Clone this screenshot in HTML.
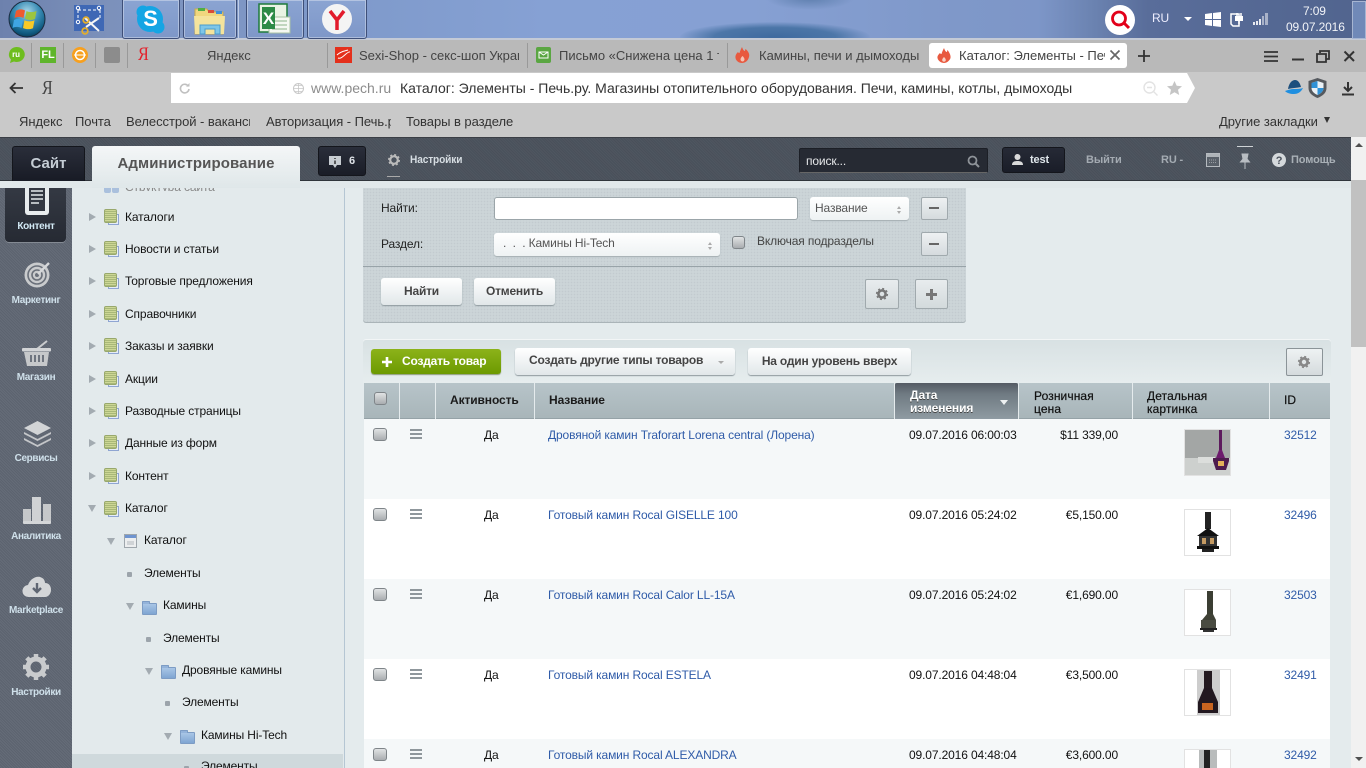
<!DOCTYPE html>
<html><head><meta charset="utf-8"><style>
html,body{margin:0;padding:0;width:1366px;height:768px;overflow:hidden;font-family:"Liberation Sans",sans-serif;font-size:12px;color:#111}
#w{position:absolute;left:0;top:0;width:1366px;height:768px;overflow:hidden;letter-spacing:-.13px}
.a,.t{position:absolute}
.t{white-space:nowrap;line-height:14px}
svg{position:absolute;overflow:visible}
.tb{position:absolute;top:0;height:38px;border:1px solid #3e4f78;border-top:0;border-radius:0 0 3px 3px;background:linear-gradient(#8ba4d2,#7e97c8);box-shadow:inset 0 0 0 1px rgba(255,255,255,.35)}
.tab{font-size:13px;color:#444;top:49px;overflow:hidden;letter-spacing:0}
.bm{font-size:13px;color:#333;top:115px;overflow:hidden;letter-spacing:-.05px}
.sep{position:absolute;top:43px;width:1px;height:25px;background:#999}
.side{color:#cfe0ea;font-size:10px;font-weight:bold;text-align:center;left:0;width:72px;letter-spacing:-.35px}
.tr{font-size:12px;color:#111}
.arr{position:absolute;width:0;height:0;border-left:7px solid #a3abb1;border-top:4.500px solid transparent;border-bottom:4.500px solid transparent}
.dn{position:absolute;width:0;height:0;border-top:7px solid #a3abb1;border-left:4.500px solid transparent;border-right:4.500px solid transparent}
.dot{position:absolute;width:5px;height:5px;background:#9ca4ab;border-radius:1px}
.bk{position:absolute;width:11px;height:12px;background:repeating-linear-gradient(#cdd795 0 1px,#a9b878 1px 2px);border:1px solid #98a86c;border-radius:2px;box-sizing:content-box}
.bk2{position:absolute;width:9px;height:9px;background:#e6edf8;border:1px solid #8fa5d2}
.fd{position:absolute;width:13px;height:10px;background:linear-gradient(#a9c6e6,#7fa5d2);border:1px solid #7d9cc4;border-radius:1px}
.fd:before{content:"";position:absolute;left:-1px;top:-3px;width:6px;height:2px;background:#93b3da;border:1px solid #7d9cc4;border-bottom:0;border-radius:1px 1px 0 0}
.btn{position:absolute;background:linear-gradient(#fff,#e1e7e9);border-radius:3px;box-shadow:0 1px 1px #8f9a9f;text-align:center;font-weight:bold;color:#444;font-size:12px;letter-spacing:-.2px}
.sq{position:absolute;background:linear-gradient(#eef1f2,#d5dbde);border:1px solid #a0a9ad;border-radius:2px;box-sizing:border-box}
.cb{position:absolute;width:14px;height:13px;box-sizing:border-box;background:linear-gradient(#e1e3e4,#a9adb0);border:1px solid #7f8589;border-radius:3px}
.th{color:#111;line-height:13px;letter-spacing:.1px;-webkit-text-stroke:.2px #111}
.sp{position:absolute;top:383px;width:1px;height:36px;background:#e5ebed}
.ln{color:#2f5ba8}
.hm{position:absolute;left:410px;width:12px;height:2px;background:#8f979c;box-shadow:0 4px 0 #8f979c,0 8px 0 #8f979c}
.ig{position:absolute;left:1184px;width:45px;height:45px;background:#fff;border:1px solid #e2e2e2;overflow:hidden}
</style></head><body><div id="w">

<!-- taskbar -->
<div class="a" style="left:0;top:0;width:1366px;height:38px;background:linear-gradient(90deg,#6d81ad 0,#7c91bb 8%,#7f9acb 26%,#86a1d4 40%,#86a0d3 55%,#7f98c9 70%,#7d96c8 76%,#6b83b1 80%,#596d9a 84%,#51648e 100%)"></div>
<div class="a" style="left:0;top:38px;width:1366px;height:2px;background:#c4cad6"></div>
<div class="a" style="left:660px;top:0;width:240px;height:38px;overflow:hidden"><div class="a" style="left:20px;top:22px;width:190px;height:30px;border-radius:50%;background:radial-gradient(#3f6a9f 0,#4c76a8 45%,rgba(110,140,190,0) 72%)"></div><div class="a" style="left:105px;top:-14px;width:90px;height:24px;border-radius:50%;background:radial-gradient(#5e7fae,rgba(110,140,190,0) 70%)"></div></div>
<svg style="left:8px;top:0" width="40" height="39"><defs><radialGradient id="o" cx=".5" cy=".3" r=".75"><stop offset="0" stop-color="#a9d8ea"/><stop offset=".45" stop-color="#3b8db5"/><stop offset=".8" stop-color="#0f5a80"/><stop offset="1" stop-color="#0a3550"/></radialGradient></defs><circle cx="19" cy="19" r="18" fill="url(#o)" stroke="#1b2b3f"/><path d="M8 11c3-2 6-2 9-.500l-1.500 7.500c-3-1.500-6-1.500-9 0z" fill="#ee5a2f"/><path d="M18.500 11c3 1.500 6 1.500 10 0l-1.500 8c-3 1.300-7 1.300-10-.2z" fill="#9cc53f"/><path d="M6 20c3-1.500 6-1.500 9 0l-1.500 8c-3-1.500-6-1.500-9 0z" fill="#3fa5e3"/><path d="M16.500 20.200c3 1.500 7 1.500 10 0l-1.500 8c-3 1.300-7 1.300-10-.2z" fill="#f8c927"/></svg>
<svg style="left:74px;top:5px" width="30" height="31"><rect width="30" height="26" fill="#3f68b5"/><path d="M4 5h22M4 5v10M26 5v10" stroke="#fff" stroke-dasharray="3 2" fill="none"/><circle cx="4" cy="3" r="1.700" fill="none" stroke="#fff"/><circle cx="25" cy="3" r="1.700" fill="none" stroke="#fff"/><circle cx="4" cy="17" r="1.700" fill="none" stroke="#fff"/><path d="M12 22L25 13M25 26L11 13" stroke="#f5f5f5" stroke-width="2"/><circle cx="12" cy="15" r="2.800" fill="none" stroke="#e3ae2b" stroke-width="1.800"/><circle cx="11" cy="26" r="2.800" fill="none" stroke="#e3ae2b" stroke-width="1.800"/></svg>
<div class="tb" style="left:122px;width:56px"></div>
<div class="tb" style="left:183px;width:52px"></div>
<div class="a" style="left:238px;top:0;width:1px;height:38px;background:#c0cde5"></div>
<div class="tb" style="left:246px;width:56px"></div>
<div class="tb" style="left:307px;width:58px"></div>
<svg style="left:135px;top:4px" width="32" height="32"><circle cx="15" cy="15" r="13" fill="#14a5e4"/><circle cx="8" cy="8" r="6.500" fill="#14a5e4"/><circle cx="23" cy="23" r="6.500" fill="#14a5e4"/><text x="15.500" y="22" text-anchor="middle" font-family="Liberation Sans" font-weight="bold" font-size="22" fill="#fff">S</text></svg>
<svg style="left:194px;top:7px" width="32" height="29"><path d="M1 2h12l2 3h14v22H1z" fill="#f0d77e" stroke="#c6a94e"/><rect x="4" y="1" width="7" height="3" fill="#4fae45"/><rect x="14" y="3" width="6" height="3" fill="#d84b3a"/><rect x="22" y="4" width="6" height="3" fill="#3f8fd8"/><path d="M0 9h31l-1 18H1z" fill="#f4e39c"/><path d="M6 27v-9h20v9h-5v-5H11v5z" fill="#7ec6e8" stroke="#4b9ccb"/></svg>
<svg style="left:259px;top:4px" width="32" height="30"><rect x="0" y="0" width="28" height="28" fill="#e9f3e4" stroke="#1e7b3c" stroke-width="1.500"/><rect x="10" y="13" width="21" height="16" fill="#f5f8f2" stroke="#a9c2a4"/><path d="M13 17h15M13 21h15M13 25h15" stroke="#8db58a"/><path d="M3 3h13v22H3z" fill="#2c8a46"/><text x="9.500" y="20" text-anchor="middle" font-family="Liberation Sans" font-weight="bold" font-size="17" fill="#fff">X</text></svg>
<svg style="left:322px;top:4px" width="30" height="32"><circle cx="15" cy="15" r="15" fill="#f4f4f4"/><path d="M8 7l7 9 7-9M15 16v10" stroke="#e21b2c" stroke-width="3.500" fill="none"/></svg>
<svg style="left:1105px;top:5px" width="30" height="30"><circle cx="15" cy="15" r="15" fill="#fff"/><circle cx="14" cy="13.500" r="6.500" fill="none" stroke="#e2001a" stroke-width="2.800"/><path d="M19 18l5 5" stroke="#e2001a" stroke-width="3"/></svg>
<div class="t" style="left:1152px;top:11px;color:#eef;font-size:12px">RU</div>
<div class="a" style="left:1184px;top:17px;border-top:4px solid #fff;border-left:4px solid transparent;border-right:4px solid transparent"></div>
<svg style="left:1205px;top:12px" width="16" height="15"><path d="M0 2l7-1v6H0zM8 1l8-1v7H8zM0 8h7v6l-7-1zM8 8h8v7l-8-1z" fill="#fff"/></svg>
<svg style="left:1229px;top:11px" width="15" height="16"><path d="M2 3h8v12H4l-2-2z" fill="none" stroke="#fff" stroke-width="1.500"/><path d="M6 5h8v5H6z" fill="#fff"/><path d="M8 2v3M12 2v3M10 10v3" stroke="#fff" stroke-width="1.500"/></svg>
<svg style="left:1253px;top:13px" width="16" height="12"><g fill="#e8eaf0"><rect x="0" y="9" width="2" height="3"/><rect x="3" y="8" width="2" height="4"/><rect x="6" y="6" width="2" height="6"/></g><g fill="#a9b2c8"><rect x="9" y="3" width="2" height="9"/><rect x="12" y="0" width="3" height="12"/></g></svg>
<div class="t" style="left:1303px;top:4px;color:#f2f4f8;font-size:12px">7:09</div>
<div class="t" style="left:1286px;top:20px;color:#f2f4f8;font-size:12px">09.07.2016</div>
<div class="a" style="left:1352px;top:1px;width:12px;height:36px;background:#7089b8;border:1px solid #a6b5d2"></div>

<!-- tab strip -->
<div class="a" style="left:0;top:40px;width:1366px;height:32px;background:#b9b9b9"></div>
<div class="sep" style="left:31px"></div><div class="sep" style="left:63px"></div><div class="sep" style="left:95px"></div><div class="sep" style="left:127px"></div><div class="sep" style="left:327px"></div><div class="sep" style="left:527px"></div><div class="sep" style="left:727px"></div>
<svg style="left:8px;top:47px" width="16" height="17"><path d="M8 0a8 7.500 0 1 1-2 14.500L2 16l1-3.500A8 7.500 0 0 1 8 0z" fill="#6ebd1e"/><text x="8" y="10" text-anchor="middle" font-family="Liberation Sans" font-weight="bold" font-size="8" fill="#fff">ru</text></svg>
<div class="a" style="left:40px;top:47px;width:16px;height:16px;background:#5fb52c;color:#fff;font:bold 11px/16px 'Liberation Sans';text-align:center">FL</div>
<svg style="left:72px;top:47px" width="16" height="16"><circle cx="8" cy="8" r="8" fill="#f7a01e"/><circle cx="8" cy="8" r="4.500" fill="none" stroke="#fff" stroke-width="1.500"/><path d="M2 8h12" stroke="#fff"/></svg>
<div class="a" style="left:104px;top:47px;width:16px;height:16px;background:#8c8c8c;border-radius:2px"></div>
<div class="t" style="left:138px;top:45px;font:19px/20px 'Liberation Serif';color:#e3202a;transform:scaleX(.85);transform-origin:0 0">Я</div>
<div class="t tab" style="left:207px">Яндекс</div>
<svg style="left:335px;top:47px" width="17" height="16"><rect width="17" height="16" fill="#e4301c"/><path d="M3 11c4 2 9-7 12-6M2 8c4-4 8-4 11-5" stroke="#fff" fill="none"/></svg>
<div class="t tab" style="left:359px;width:160px">Sexi-Shop - секс-шоп Украи</div>
<svg style="left:536px;top:47px" width="15" height="16"><rect width="15" height="16" rx="2" fill="#5aa642"/><path d="M3 5h9v6H3zM3 5l4.500 3L12 5" stroke="#fff" fill="none"/></svg>
<div class="t tab" style="left:559px;width:160px">Письмо «Снижена цена 1 т</div>
<svg style="left:735px;top:47px" width="15" height="16"><path d="M7 0c1 3 2 4 3 4 0 0 0-1 .5-2C13 4 15 7 14 10c-1 4-4 6-7 6s-6-2-6.500-5C0 8 2 6 3 5c.5 1 1 1 1.500 1C5 4 6 2 7 0z" fill="#e8593f"/><path d="M7.500 9c1 1 2 2 2 3.500 0 1-1 2-2 2s-2-1-2-2c0-1.500 1-2.500 2-3.500z" fill="#f5c4b5"/></svg>
<div class="t tab" style="left:759px;width:160px">Камины, печи и дымоходы</div>
<div class="a" style="left:929px;top:43px;width:198px;height:25px;background:#fff;border-radius:3px"></div>
<svg style="left:937px;top:48px" width="14" height="15"><path d="M7 0c1 3 2 4 3 4 0 0 0-1 .5-2C12 4 14 7 13.500 10c-1 3-4 5-6.500 5s-6-2-6.500-5C0 8 2 6 3 5c.5 1 1 1 1.500 1C5 4 6 2 7 0z" fill="#e8593f"/><path d="M7 9c1 1 1.800 2 1.800 3 0 1-.8 1.800-1.800 1.800S5.200 13 5.200 12c0-1 .8-2 1.800-3z" fill="#f8d3c6"/></svg>
<div class="t tab" style="left:959px;width:146px">Каталог: Элементы - Печь</div>
<svg style="left:1110px;top:50px" width="10" height="10"><path d="M.5.5l9 9M9.500.5l-9 9" stroke="#666" stroke-width="1.700"/></svg>
<svg style="left:1138px;top:50px" width="12" height="12"><path d="M6 0v12M0 6h12" stroke="#333" stroke-width="1.800"/></svg>
<svg style="left:1264px;top:51px" width="15" height="11"><path d="M0 1h14M0 5.500h14M0 10h14" stroke="#333" stroke-width="1.800"/></svg>
<svg style="left:1292px;top:58px" width="13" height="3"><path d="M0 1.500h12" stroke="#333" stroke-width="2"/></svg>
<svg style="left:1316px;top:50px" width="15" height="13"><path d="M4 3V1h9v8h-3M1 4h9v8H1z" stroke="#333" stroke-width="1.800" fill="none"/></svg>
<svg style="left:1344px;top:51px" width="11" height="11"><path d="M.5.5l9.500 9.500M10 .5L.5 10" stroke="#333" stroke-width="2"/></svg>

<!-- address row -->
<div class="a" style="left:0;top:72px;width:1366px;height:65px;background:#c9c9c9"></div>
<svg style="left:9px;top:82px" width="15" height="12"><path d="M14 6H2M6.500 1L1.500 6l5 5" stroke="#333" stroke-width="1.800" fill="none"/></svg>
<div class="t" style="left:42px;top:78px;font:20px/20px 'Liberation Serif';color:#444;transform:scaleX(.8);transform-origin:0 0">Я</div>
<div class="a" style="left:171px;top:73px;width:1016px;height:30px;background:#fff"></div>
<div class="a" style="left:1187px;top:73px;border-left:8px solid #fff;border-top:15px solid transparent;border-bottom:15px solid transparent"></div>
<svg style="left:179px;top:83px" width="11" height="11"><path d="M9.500 3.500A4.300 4.300 0 1 0 10 6" stroke="#c0c0c0" stroke-width="1.600" fill="none"/><path d="M7 3.500h3.500V0z" fill="#c0c0c0"/></svg>
<svg style="left:293px;top:83px" width="11" height="11"><circle cx="5.500" cy="5.500" r="5" fill="none" stroke="#c8c8c8"/><path d="M0 5.500h11M5.500 0v11M2 2.500h7M2 8.500h7" stroke="#c8c8c8" stroke-width=".8"/></svg>
<div class="t" style="left:311px;top:81px;font-size:14px;color:#8c8c8c;letter-spacing:0">www.pech.ru</div>
<div class="t" style="left:400px;top:81px;font-size:14px;color:#333;letter-spacing:0">Каталог: Элементы - Печь.ру. Магазины отопительного оборудования. Печи, камины, котлы, дымоходы</div>
<svg style="left:1143px;top:81px" width="15" height="15"><circle cx="6.500" cy="6.500" r="5.500" fill="none" stroke="#e3e3e3" stroke-width="1.400"/><path d="M4 6.500h5M10.500 10.500l4 4" stroke="#e3e3e3" stroke-width="1.400"/></svg>
<svg style="left:1167px;top:81px" width="15" height="14"><path d="M7.500 0l2.200 4.800 5.300.5-4 3.500 1.200 5.200-4.700-2.700L2.800 14 4 8.800 0 5.300l5.300-.5z" fill="#c5c5c5"/></svg>
<svg style="left:1284px;top:80px" width="20" height="15"><path d="M1 11c3-1 6-2 9-2s6 0 9-1c-2 4-5 6-9 6-4 0-7-1-9-3z" fill="#1f8fe0"/><path d="M4 9C5 3 8 0 11 0s5 3 6 7c-5 1-9 1-13 2z" fill="#1d4f7d"/></svg>
<svg style="left:1308px;top:78px" width="19" height="20"><path d="M9.500 0l9 3v7c0 5-4 8-9 10-5-2-9-5-9-10V3z" fill="#55595e"/><path d="M9.500 3l6 2v5c0 3-2.500 5.500-6 7-3.500-1.500-6-4-6-7V5z" fill="#eaf1f6"/><path d="M9.500 3v7H3.500V5zM9.500 10h6c0 3-2.500 5.500-6 7z" fill="#2f91d6"/></svg>
<svg style="left:1342px;top:82px" width="12" height="14"><path d="M6 0v8M2 5l4 4 4-4" stroke="#333" stroke-width="2" fill="none"/><path d="M0 12.500h12" stroke="#333" stroke-width="2"/></svg>

<!-- bookmarks -->
<div class="t bm" style="left:19px">Яндекс</div>
<div class="t bm" style="left:75px">Почта</div>
<div class="t bm" style="left:126px;width:124px">Велесстрой - вакансии</div>
<div class="t bm" style="left:266px;width:125px">Авторизация - Печь.ру</div>
<div class="t bm" style="left:406px">Товары в разделе</div>
<div class="t bm" style="left:1219px">Другие закладки</div>
<div class="a" style="left:1324px;top:117px;border-top:6px solid #333;border-left:3.500px solid transparent;border-right:3.500px solid transparent"></div>

<!-- admin bar -->
<div class="a" style="left:0;top:137px;width:1351px;height:43px;background:repeating-linear-gradient(45deg,#49505a 0 1px,#4f5660 1px 2px);border-top:1px solid #3b3f46;box-sizing:border-box"></div>
<div class="a" style="left:0;top:180px;width:1351px;height:8px;background:#e1e8ea;border-top:1px solid #30353b;box-sizing:border-box"></div>
<div class="a" style="left:12px;top:146px;width:73px;height:35px;background:linear-gradient(#2a2e3a,#181b25);border:1px solid #14161c;border-bottom:0;border-radius:3px 3px 0 0;box-sizing:border-box;color:#c4ccd4;font:bold 15px/34px 'Liberation Sans';text-align:center;letter-spacing:0">Сайт</div>
<div class="a" style="left:92px;top:146px;width:208px;height:42px;background:linear-gradient(#f4f6f7,#dfe7e9);border-radius:3px 3px 0 0;color:#555;font:bold 15px/36px 'Liberation Sans';text-align:center;letter-spacing:.1px">Администрирование</div>
<div class="a" style="left:318px;top:146px;width:48px;height:30px;background:linear-gradient(#2a2e3a,#1a1d27);border:1px solid #14161c;border-radius:3px;box-sizing:border-box"></div>
<svg style="left:329px;top:156px" width="13" height="12"><path d="M0 0h12v9H8l-2 3-2-3H0z" fill="#c8cdd2"/><path d="M6 2v1M6 4.500V8" stroke="#333" stroke-width="1.500"/></svg>
<div class="t" style="left:349px;top:154px;color:#dfe3e8;font-weight:bold;font-size:11px">6</div>
<svg style="left:388px;top:154px" width="12" height="12"><circle cx="6" cy="6" r="3.800" fill="none" stroke="#bbb" stroke-width="2.200"/><circle cx="6" cy="6" r="5.300" fill="none" stroke="#bbb" stroke-width="1.400" stroke-dasharray="2 2.160"/></svg>
<div class="t" style="left:410px;top:153px;color:#d6dde2;font-size:11px;font-weight:bold;transform:scaleX(.92);transform-origin:0 0">Настройки</div>
<div class="a" style="left:387px;top:176px;width:13px;height:1px;background:#aaa"></div>
<div class="a" style="left:799px;top:148px;width:189px;height:25px;background:#262a33;border:1px solid #1c1f26;border-bottom-color:#666;border-radius:2px;box-sizing:border-box"></div>
<div class="t" style="left:806px;top:154px;color:#e6e8ea;font-size:12px">поиск...</div>
<svg style="left:967px;top:155px" width="13" height="13"><circle cx="5.500" cy="5.500" r="4" fill="none" stroke="#8d9298" stroke-width="1.800"/><path d="M8.500 8.500l3.500 3.500" stroke="#8d9298" stroke-width="2"/></svg>
<div class="a" style="left:1002px;top:147px;width:63px;height:26px;background:linear-gradient(#262a36,#1a1d28);border:1px solid #14161c;border-radius:3px;box-sizing:border-box"></div>
<svg style="left:1012px;top:154px" width="11" height="11"><circle cx="5.500" cy="3" r="3" fill="#d9d9d9"/><path d="M0 11c0-3 2-4 5.500-4S11 8 11 11z" fill="#d9d9d9"/></svg>
<div class="t" style="left:1030px;top:153px;color:#e0e7ec;font-weight:bold;font-size:11px">test</div>
<div class="t" style="left:1086px;top:153px;color:#a4abb2;font-weight:bold;font-size:11px">Выйти</div>
<div class="t" style="left:1161px;top:153px;color:#a4abb2;font-weight:bold;font-size:11px">RU -</div>
<svg style="left:1206px;top:153px" width="14" height="14"><rect x=".5" y=".5" width="13" height="13" fill="#596069" stroke="#b5babf"/><rect x="1" y="1" width="12" height="3" fill="#aeb3b8"/><path d="M3 7h8M3 9.500h8" stroke="#9a9fa5" stroke-dasharray="1 1"/></svg>
<div class="a" style="left:1237px;top:146px;width:16px;height:1px;background:#cfd3d6"></div>
<svg style="left:1240px;top:154px" width="10" height="15"><path d="M2 0h6l-1 5 2.500 3h-9L3 5zM5 8v7" stroke="#b8bdc2" fill="#b8bdc2"/></svg>
<svg style="left:1272px;top:153px" width="14" height="14"><circle cx="7" cy="7" r="7" fill="#d4d8db"/><text x="7" y="11" text-anchor="middle" font-family="Liberation Sans" font-weight="bold" font-size="11" fill="#4b525c">?</text></svg>
<div class="t" style="left:1291px;top:153px;color:#a9b0b6;font-weight:bold;font-size:11px">Помощь</div>

<!-- page scrollbar -->
<div class="a" style="left:1351px;top:137px;width:15px;height:631px;background:#f1f1f1"></div>
<div class="a" style="left:1355px;top:143px;border-bottom:4px solid #505050;border-left:4px solid transparent;border-right:4px solid transparent"></div>
<div class="a" style="left:1351px;top:180px;width:15px;height:167px;background:#c1c1c1"></div>
<div class="a" style="left:1355px;top:757px;border-top:4px solid #505050;border-left:4px solid transparent;border-right:4px solid transparent"></div>

<!-- sidebar -->
<div class="a" style="left:0;top:188px;width:72px;height:580px;background:repeating-linear-gradient(45deg,#5c636f 0 1px,#656c78 1px 2px)"></div>
<div class="a" style="left:5px;top:188px;width:61px;height:54px;background:linear-gradient(#343943,#262a33);border-radius:0 0 4px 4px;box-shadow:0 1px 0 #848a93"></div>
<div class="a" style="left:25px;top:188px;width:24px;height:27px;background:#e8ecee;border-radius:0 0 3px 3px"></div>
<div class="a" style="left:29px;top:188px;width:16px;height:23px;background:#333842"></div>
<svg style="left:31px;top:190px" width="13" height="16"><path d="M0 1h12M0 5h12M0 9h12M0 13h8" stroke="#e5e9eb" stroke-width="1.500"/></svg>
<div class="t side" style="top:220px;color:#d3eaf5">Контент</div>
<svg style="left:24px;top:261px" width="27" height="27"><circle cx="13" cy="14" r="12.500" fill="#c9cbcd"/><circle cx="13" cy="14" r="9" fill="none" stroke="#6a707a" stroke-width="1.600"/><circle cx="13" cy="14" r="5" fill="none" stroke="#6a707a" stroke-width="1.600"/><circle cx="13" cy="14" r="2" fill="#6a707a"/><path d="M14 13l11-11" stroke="#d5d7d9" stroke-width="2.400"/></svg>
<div class="t side" style="top:294px">Маркетинг</div>
<svg style="left:22px;top:340px" width="30" height="27"><path d="M15 9l10-8" stroke="#c9cbcd" stroke-width="2"/><rect x="0" y="8" width="29" height="3.500" rx="1" fill="#d2d4d6"/><path d="M2 12h25l-2 14H5z" fill="#c6c8ca"/><path d="M9 15v7M13 15v7M17 15v7M21 15v7" stroke="#646b76" stroke-width="1.800"/></svg>
<div class="t side" style="top:371px">Магазин</div>
<svg style="left:23px;top:421px" width="29" height="27"><path d="M14.500 0L28 7l-13.500 7L1 7z" fill="#d2d4d6"/><path d="M1 11l13.500 7L28 11l0 2-13.500 7L1 13z" fill="#c4c6c9"/><path d="M1 17l13.500 7L28 17l0 2-13.500 7L1 19z" fill="#c4c6c9"/></svg>
<div class="t side" style="top:452px">Сервисы</div>
<svg style="left:23px;top:497px" width="29" height="28"><rect x="0" y="12" width="8" height="13" fill="#c6c8ca"/><rect x="9" y="0" width="9" height="25" fill="#d0d2d4"/><rect x="20" y="7" width="8" height="18" fill="#c6c8ca"/><rect x="0" y="24" width="28" height="3" rx="1" fill="#d4d6d8"/></svg>
<div class="t side" style="top:530px">Аналитика</div>
<svg style="left:22px;top:577px" width="30" height="21"><path d="M7 20a6 6 0 0 1-1-12C8 2 14-1 18 0c4 1 5 4 5 6 4 0 6 3 6 7 0 4-3 7-6 7z" fill="#d4d6d8"/><path d="M15 6v8M11 11l4 4 4-4" stroke="#5f6672" stroke-width="2.400" fill="none"/></svg>
<div class="t side" style="top:604px">Marketplace</div>
<svg style="left:23px;top:654px" width="27" height="27"><circle cx="13" cy="13" r="8" fill="none" stroke="#c9cbcd" stroke-width="5"/><path d="M13 0v5M13 21v5M0 13h5M21 13h5M3.800 3.800l3.500 3.500M18.700 18.700l3.500 3.500M3.800 22.200l3.500-3.500M18.700 7.300l3.500-3.500" stroke="#c9cbcd" stroke-width="4.500"/></svg>
<div class="t side" style="top:686px">Настройки</div>

<!-- tree panel -->
<div class="a" style="left:72px;top:188px;width:273px;height:580px;background:#e3eaec;border-right:1px solid #b5c6d3;box-sizing:border-box"></div>
<div class="a" style="left:72px;top:754px;width:271px;height:14px;background:#cfd9dc"></div>
<div class="a" style="left:104px;top:188px;width:7px;height:5px;background:#aac0dd;border-radius:0 0 2px 2px"></div>
<div class="a" style="left:112px;top:188px;width:7px;height:5px;background:#aac0dd;border-radius:0 0 2px 2px"></div>
<div class="a" style="left:125px;top:188px;width:100px;height:3px;overflow:hidden"><div class="t" style="left:0;top:-8px;color:#888">Структура сайта</div></div>

<div class="arr" style="left:89px;top:213px"></div><div class="bk2" style="left:108px;top:214px"></div><div class="bk" style="left:104px;top:209px"></div><div class="t tr" style="left:125px;top:210px">Каталоги</div>
<div class="arr" style="left:89px;top:245px"></div><div class="bk2" style="left:108px;top:246px"></div><div class="bk" style="left:104px;top:241px"></div><div class="t tr" style="left:125px;top:242px">Новости и статьи</div>
<div class="arr" style="left:89px;top:277px"></div><div class="bk2" style="left:108px;top:278px"></div><div class="bk" style="left:104px;top:273px"></div><div class="t tr" style="left:125px;top:274px">Торговые предложения</div>
<div class="arr" style="left:89px;top:310px"></div><div class="bk2" style="left:108px;top:311px"></div><div class="bk" style="left:104px;top:306px"></div><div class="t tr" style="left:125px;top:307px">Справочники</div>
<div class="arr" style="left:89px;top:342px"></div><div class="bk2" style="left:108px;top:343px"></div><div class="bk" style="left:104px;top:338px"></div><div class="t tr" style="left:125px;top:339px">Заказы и заявки</div>
<div class="arr" style="left:89px;top:375px"></div><div class="bk2" style="left:108px;top:376px"></div><div class="bk" style="left:104px;top:371px"></div><div class="t tr" style="left:125px;top:372px">Акции</div>
<div class="arr" style="left:89px;top:407px"></div><div class="bk2" style="left:108px;top:408px"></div><div class="bk" style="left:104px;top:403px"></div><div class="t tr" style="left:125px;top:404px">Разводные страницы</div>
<div class="arr" style="left:89px;top:439px"></div><div class="bk2" style="left:108px;top:440px"></div><div class="bk" style="left:104px;top:435px"></div><div class="t tr" style="left:125px;top:436px">Данные из форм</div>
<div class="arr" style="left:89px;top:472px"></div><div class="bk2" style="left:108px;top:473px"></div><div class="bk" style="left:104px;top:468px"></div><div class="t tr" style="left:125px;top:469px">Контент</div>
<div class="dn" style="left:88px;top:505px"></div><div class="bk2" style="left:108px;top:506px"></div><div class="bk" style="left:104px;top:501px"></div><div class="t tr" style="left:125px;top:501px">Каталог</div>
<div class="dn" style="left:107px;top:538px"></div>
<svg style="left:124px;top:534px" width="13" height="14"><rect x=".5" y=".5" width="12" height="13" fill="#eceeef" stroke="#9ea6ac"/><rect x="1" y="1" width="11" height="3" fill="#6e94d0"/><rect x="3" y="7" width="7" height="4" fill="#cfd3d6"/></svg>
<div class="t tr" style="left:144px;top:533px">Каталог</div>
<div class="dot" style="left:127px;top:572px"></div><div class="t tr" style="left:144px;top:566px">Элементы</div>
<div class="dn" style="left:126px;top:603px"></div><div class="fd" style="left:142px;top:603px"></div><div class="t tr" style="left:163px;top:598px">Камины</div>
<div class="dot" style="left:146px;top:637px"></div><div class="t tr" style="left:163px;top:631px">Элементы</div>
<div class="dn" style="left:145px;top:668px"></div><div class="fd" style="left:161px;top:667px"></div><div class="t tr" style="left:182px;top:663px">Дровяные камины</div>
<div class="dot" style="left:165px;top:701px"></div><div class="t tr" style="left:182px;top:695px">Элементы</div>
<div class="dn" style="left:164px;top:733px"></div><div class="fd" style="left:180px;top:732px"></div><div class="t tr" style="left:201px;top:728px">Камины Hi-Tech</div>
<div class="dot" style="left:184px;top:766px"></div><div class="t tr" style="left:201px;top:759px">Элементы</div>

<!-- content bg -->
<div class="a" style="left:345px;top:188px;width:1006px;height:580px;background:#e4ebed"></div>

<!-- filter -->
<div class="a" style="left:363px;top:188px;width:603px;height:134px;background-color:#ccd5d8;background-image:radial-gradient(#c2cbcf 35%,transparent 40%);background-size:3px 3px;border-radius:0 0 3px 3px;box-shadow:0 1px 0 #aab4b8"></div>
<div class="a" style="left:363px;top:266px;width:603px;height:1px;background:#98a3a8"></div>
<div class="t" style="left:381px;top:201px;color:#222">Найти:</div>
<div class="t" style="left:381px;top:237px;color:#222">Раздел:</div>
<div class="a" style="left:494px;top:197px;width:304px;height:23px;background:#fff;border:1px solid #9ba5a9;border-radius:3px;box-sizing:border-box"></div>
<div class="a" style="left:810px;top:197px;width:99px;height:23px;background:linear-gradient(#fff,#eef2f3);border-radius:3px;box-shadow:0 1px 1px #a4adb1"></div>
<div class="t" style="left:815px;top:201px;color:#555">Название</div>
<div class="a" style="left:897px;top:206px;border-bottom:3px solid #aaa;border-left:2px solid transparent;border-right:2px solid transparent"></div>
<div class="a" style="left:897px;top:211px;border-top:3px solid #aaa;border-left:2px solid transparent;border-right:2px solid transparent"></div>
<div class="sq" style="left:921px;top:197px;width:27px;height:23px"></div>
<div class="a" style="left:929px;top:207px;width:10px;height:2px;background:#666"></div>
<div class="a" style="left:494px;top:233px;width:226px;height:23px;background:linear-gradient(#fff,#eef2f3);border-radius:3px;box-shadow:0 1px 1px #a4adb1"></div>
<div class="t" style="left:503px;top:236px;color:#555">. &nbsp;. &nbsp;. Камины Hi-Tech</div>
<div class="a" style="left:708px;top:242px;border-bottom:3px solid #aaa;border-left:2px solid transparent;border-right:2px solid transparent"></div>
<div class="a" style="left:708px;top:247px;border-top:3px solid #aaa;border-left:2px solid transparent;border-right:2px solid transparent"></div>
<div class="cb" style="left:732px;top:236px;width:13px"></div>
<div class="t" style="left:757px;top:234px;color:#444">Включая подразделы</div>
<div class="sq" style="left:921px;top:232px;width:27px;height:24px"></div>
<div class="a" style="left:929px;top:243px;width:10px;height:2px;background:#666"></div>
<div class="btn" style="left:381px;top:278px;width:81px;height:27px;line-height:27px">Найти</div>
<div class="btn" style="left:474px;top:278px;width:81px;height:27px;line-height:27px">Отменить</div>
<div class="sq" style="left:865px;top:279px;width:34px;height:30px;background:linear-gradient(#e8ecee,#d3dadc)"></div>
<svg style="left:876px;top:288px" width="12" height="12"><circle cx="6" cy="6" r="3.600" fill="none" stroke="#777" stroke-width="2.600"/><circle cx="6" cy="6" r="5.400" fill="none" stroke="#777" stroke-width="1.400" stroke-dasharray="2 2.240"/></svg>
<div class="sq" style="left:915px;top:279px;width:33px;height:30px;background:linear-gradient(#e8ecee,#d3dadc)"></div>
<svg style="left:925px;top:288px" width="13" height="13"><path d="M6.500 1v11M1 6.500h11" stroke="#777" stroke-width="3"/></svg>

<!-- list toolbar -->
<div class="a" style="left:363px;top:340px;width:968px;height:43px;background:linear-gradient(#d8e1e3,#e6edee);border-radius:3px 3px 0 0;box-shadow:0 -1px 0 #f2f5f6"></div>
<div class="a" style="left:371px;top:349px;width:130px;height:25px;background:linear-gradient(#8cb31a,#6c9a00);border-radius:3px;box-shadow:0 1px 1px #8b9a77"></div>
<svg style="left:382px;top:357px" width="10" height="10"><path d="M5 0v10M0 5h10" stroke="#fff" stroke-width="2.600"/></svg>
<div class="t" style="left:402px;top:354px;color:#fff;font-weight:bold;font-size:12px;letter-spacing:-.2px">Создать товар</div>
<div class="btn" style="left:515px;top:348px;width:220px;height:27px"></div>
<div class="t" style="left:529px;top:353px;color:#444;font-weight:bold;font-size:12px;letter-spacing:-.2px">Создать другие типы товаров</div>
<div class="a" style="left:718px;top:361px;border-top:3px solid #aaa;border-left:3px solid transparent;border-right:3px solid transparent"></div>
<div class="btn" style="left:748px;top:348px;width:163px;height:27px;line-height:27px">На один уровень вверх</div>
<div class="sq" style="left:1286px;top:348px;width:37px;height:28px;background:linear-gradient(#eef2f3,#d5dbdd);border-color:#8b9498"></div>
<svg style="left:1298px;top:356px" width="12" height="12"><circle cx="6" cy="6" r="3.600" fill="none" stroke="#888" stroke-width="2.800"/><circle cx="6" cy="6" r="5.400" fill="none" stroke="#888" stroke-width="1.400" stroke-dasharray="2 2.240"/></svg>

<!-- table -->
<div class="a" style="left:364px;top:383px;width:966px;height:36px;background:linear-gradient(#b7c4c9,#a8b5b9);box-shadow:inset 0 -1px 0 #95a2a7"></div>
<div class="sp" style="left:399px"></div><div class="sp" style="left:435px"></div><div class="sp" style="left:534px"></div><div class="sp" style="left:894px"></div><div class="sp" style="left:1018px"></div><div class="sp" style="left:1132px"></div><div class="sp" style="left:1269px"></div>
<div class="a" style="left:895px;top:383px;width:123px;height:36px;background:linear-gradient(#545b64,#6f7a82 30%,#8f9ba2);border-radius:2px 2px 0 0"></div>
<div class="cb" style="left:374px;top:392px;width:13px"></div>
<div class="t" style="left:450px;top:393px;font-weight:bold;color:#1b1b1b;letter-spacing:-.1px">Активность</div>
<div class="t" style="left:549px;top:393px;font-weight:bold;color:#1b1b1b;letter-spacing:-.1px">Название</div>
<div class="t" style="left:910px;top:389px;color:#fff;font-weight:bold;font-size:12px;line-height:13px;text-shadow:0 1px 0 #444;letter-spacing:-.1px">Дата<br>изменения</div>
<div class="a" style="left:1000px;top:400px;border-top:5px solid #eef1f2;border-left:4px solid transparent;border-right:4px solid transparent"></div>
<div class="t th" style="left:1034px;top:390px">Розничная<br>цена</div>
<div class="t th" style="left:1147px;top:390px">Детальная<br>картинка</div>
<div class="t th" style="left:1284px;top:394px">ID</div>

<div class="a" style="left:364px;top:419px;width:966px;height:80px;background:#f5f8f9"></div>
<div class="a" style="left:364px;top:499px;width:966px;height:80px;background:#fff"></div>
<div class="a" style="left:364px;top:579px;width:966px;height:80px;background:#f5f8f9"></div>
<div class="a" style="left:364px;top:659px;width:966px;height:80px;background:#fff"></div>
<div class="a" style="left:364px;top:739px;width:966px;height:29px;background:#f5f8f9"></div>

<div class="cb" style="left:373px;top:428px"></div><div class="hm" style="top:429px"></div>
<div class="t" style="left:484px;top:428px">Да</div>
<div class="t ln" style="left:548px;top:428px">Дровяной камин Traforart Lorena central (Лорена)</div>
<div class="t" style="left:909px;top:428px">09.07.2016 06:00:03</div>
<div class="t" style="right:248px;top:428px">$11 339,00</div>
<div class="t ln" style="left:1284px;top:428px">32512</div>

<div class="cb" style="left:373px;top:508px"></div><div class="hm" style="top:509px"></div>
<div class="t" style="left:484px;top:508px">Да</div>
<div class="t ln" style="left:548px;top:508px">Готовый камин Rocal GISELLE 100</div>
<div class="t" style="left:909px;top:508px">09.07.2016 05:24:02</div>
<div class="t" style="right:248px;top:508px">€5,150.00</div>
<div class="t ln" style="left:1284px;top:508px">32496</div>

<div class="cb" style="left:373px;top:588px"></div><div class="hm" style="top:589px"></div>
<div class="t" style="left:484px;top:588px">Да</div>
<div class="t ln" style="left:548px;top:588px">Готовый камин Rocal Calor LL-15A</div>
<div class="t" style="left:909px;top:588px">09.07.2016 05:24:02</div>
<div class="t" style="right:248px;top:588px">€1,690.00</div>
<div class="t ln" style="left:1284px;top:588px">32503</div>

<div class="cb" style="left:373px;top:668px"></div><div class="hm" style="top:669px"></div>
<div class="t" style="left:484px;top:668px">Да</div>
<div class="t ln" style="left:548px;top:668px">Готовый камин Rocal ESTELA</div>
<div class="t" style="left:909px;top:668px">09.07.2016 04:48:04</div>
<div class="t" style="right:248px;top:668px">€3,500.00</div>
<div class="t ln" style="left:1284px;top:668px">32491</div>

<div class="cb" style="left:373px;top:748px"></div><div class="hm" style="top:749px"></div>
<div class="t" style="left:484px;top:748px">Да</div>
<div class="t ln" style="left:548px;top:748px">Готовый камин Rocal ALEXANDRA</div>
<div class="t" style="left:909px;top:748px">09.07.2016 04:48:04</div>
<div class="t" style="right:248px;top:748px">€3,600.00</div>
<div class="t ln" style="left:1284px;top:748px">32492</div>

<div class="ig" style="top:429px;background:linear-gradient(#a3a6a5 62%,#cdd0ce 62%)"><svg width="45" height="45"><rect x="13" y="27" width="17" height="6" fill="#dcdedc"/><rect x="34" y="0" width="3" height="21" fill="#5d1a5d"/><path d="M31 28l3-8h3l3 8z" fill="#6d1a6d"/><path d="M28 28h16v3l-3 9H31l-3-9z" fill="#4e1b4e"/><rect x="33" y="31" width="6" height="5" fill="#e3b05a"/></svg></div>
<div class="ig" style="top:509px"><svg width="45" height="45"><rect x="20" y="2" width="6" height="17" fill="#222"/><path d="M23 18L12 26h22z" fill="#111"/><rect x="14" y="26" width="18" height="10" fill="#333"/><rect x="17" y="28" width="4" height="6" fill="#c49a62"/><rect x="25" y="28" width="4" height="6" fill="#c49a62"/><rect x="12" y="36" width="22" height="3" fill="#111"/><rect x="17" y="39" width="12" height="3" fill="#222"/></svg></div>
<div class="ig" style="top:589px"><svg width="45" height="45"><rect x="22" y="1" width="6" height="23" fill="#3b3e33"/><path d="M22 24h6l3 6H17z" fill="#3f4136"/><rect x="16" y="30" width="15" height="8" fill="#4a4c42"/><rect x="15" y="38" width="17" height="2" fill="#222"/><rect x="18" y="40" width="11" height="2" fill="#333"/></svg></div>
<div class="ig" style="top:669px"><svg width="45" height="45"><rect x="12" y="0" width="23" height="45" fill="#cdcdcd"/><rect x="19" y="1" width="8" height="17" fill="#241a20"/><path d="M19 18h8l6 14v11H13V32z" fill="#221820"/><rect x="17" y="33" width="11" height="7" fill="#c86420"/></svg></div>
<div class="ig" style="top:749px"><svg width="45" height="20"><rect x="14" y="0" width="18" height="45" fill="#b9bcbc"/><rect x="19" y="0" width="6" height="20" fill="#222"/></svg></div>
</div></body></html>
